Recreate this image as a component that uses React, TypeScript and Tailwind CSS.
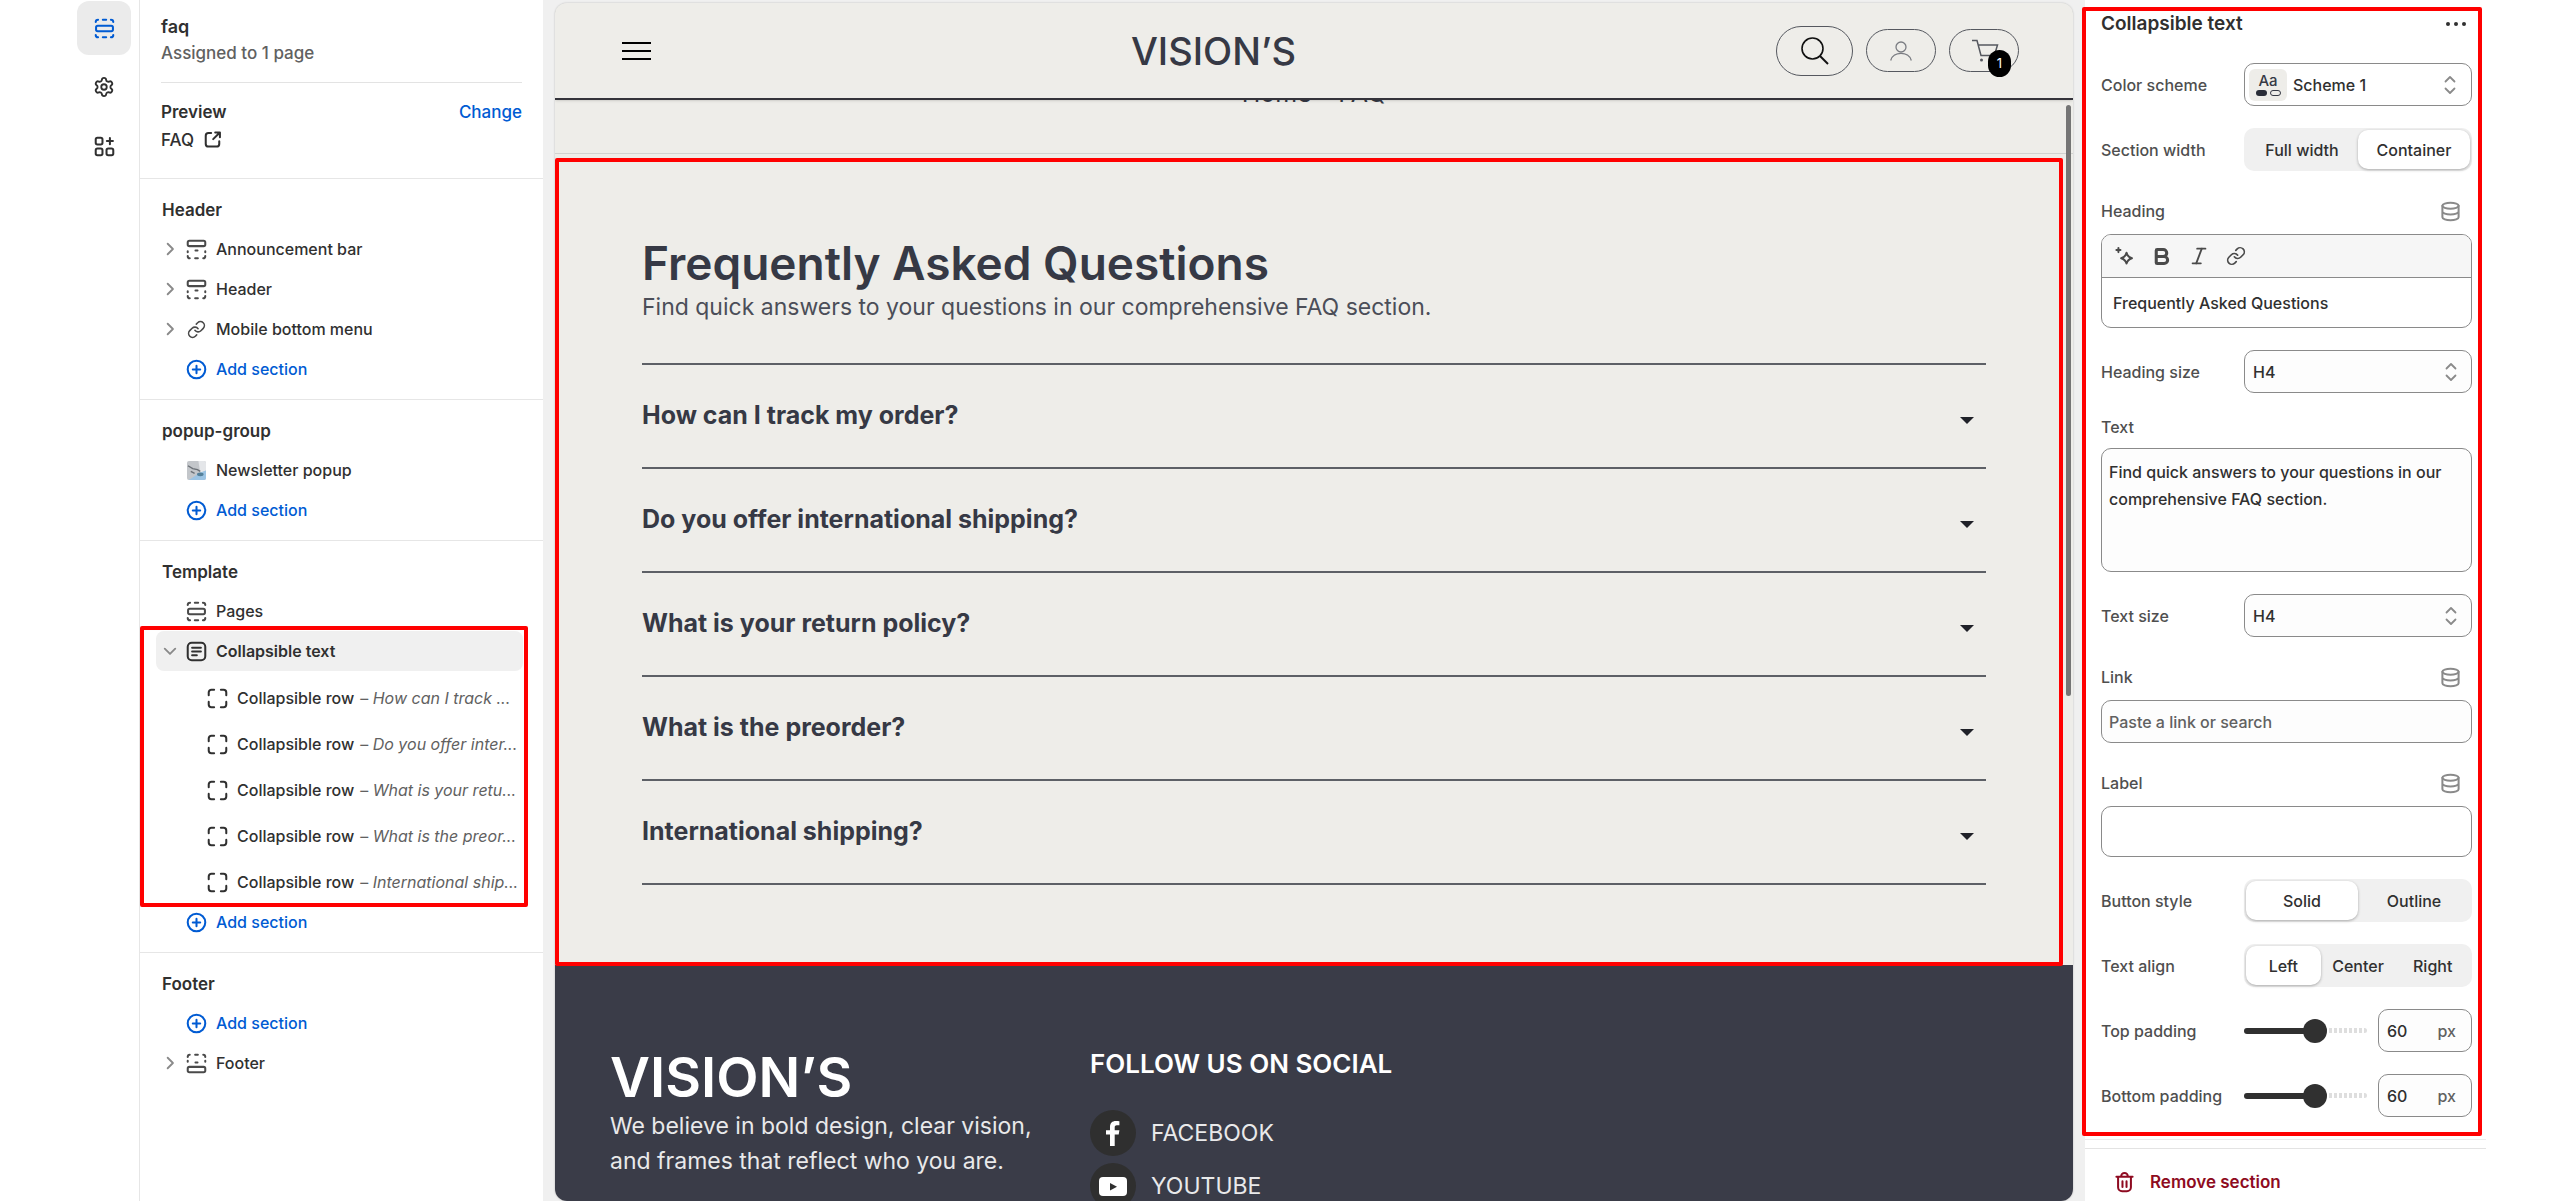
import { useState } from "react";
import type { ReactNode } from "react";
import { Bold, Italic, Link as LinkIcon, Settings } from "lucide-react";

const faqs = [
  { question: "How can I track my order?", short: "How can I track ..." },
  { question: "Do you offer international shipping?", short: "Do you offer inter..." },
  { question: "What is your return policy?", short: "What is your retu..." },
  { question: "What is the preorder?", short: "What is the preor..." },
  { question: "International shipping?", short: "International ship..." },
];

type IconProps = { children: ReactNode; className?: string };

function Icon({ children, className = "" }: IconProps) {
  return (
    <svg
      viewBox="0 0 20 20"
      fill="none"
      stroke="currentColor"
      strokeWidth="1.5"
      strokeLinecap="round"
      strokeLinejoin="round"
      aria-hidden="true"
      className={`size-[27px] shrink-0 ${className}`}
    >
      {children}
    </svg>
  );
}

const SectionsIcon = () => (
  <Icon>
    <rect x="3.75" y="8" width="12.5" height="4" rx="1.25" />
    <path d="M3.5 5.25c0-1 .7-1.75 1.75-1.75M8.75 3.5h2.5M14.75 3.5c1.05 0 1.75.75 1.75 1.75M3.5 14.75c0 1 .7 1.75 1.75 1.75M8.75 16.5h2.5M14.75 16.5c1.05 0 1.75-.75 1.75-1.75" />
  </Icon>
);

const HeaderIcon = ({ flip = false }: { flip?: boolean }) => (
  <Icon className={flip ? "rotate-180" : ""}>
    <rect x="3.5" y="3.5" width="13" height="4" rx="1.25" />
    <path d="M3.5 11.25v.75M16.5 11.25v.75M9.25 10.75h1.5M3.5 14.75c0 1 .6 1.75 1.5 1.75M9 16.5h2M15 16.5c.9 0 1.5-.75 1.5-1.75" />
  </Icon>
);

const BlockIcon = () => (
  <Icon>
    <path d="M3.5 7.5v-2a2 2 0 0 1 2-2h2M12.5 3.5h2a2 2 0 0 1 2 2v2M16.5 12.5v2a2 2 0 0 1-2 2h-2M7.5 16.5h-2a2 2 0 0 1-2-2v-2" />
  </Icon>
);

const TextBlockIcon = () => (
  <Icon>
    <rect x="3.5" y="3.5" width="13" height="13" rx="3" />
    <path d="M6.75 7.25h6.5M6.75 10h6.5M6.75 12.75h3.5" />
  </Icon>
);

const PlusCircleIcon = () => (
  <Icon>
    <circle cx="10" cy="10" r="6.5" />
    <path d="M10 7.25v5.5M7.25 10h5.5" />
  </Icon>
);

const AppsIcon = () => (
  <Icon>
    <rect x="3.5" y="3.5" width="5" height="5" rx="1.25" />
    <rect x="3.5" y="11.5" width="5" height="5" rx="1.25" />
    <rect x="11.5" y="11.5" width="5" height="5" rx="1.25" />
    <path d="M14 3.75v4.5M11.75 6h4.5" />
  </Icon>
);

const ExternalIcon = () => (
  <Icon>
    <path d="M9 4.5H7a2 2 0 0 0-2 2v6a2 2 0 0 0 2 2h6a2 2 0 0 0 2-2v-2M12 4h3.5v3.500M15.250 4.250 10.500 9" />
  </Icon>
);

const DatabaseIcon = () => (
  <Icon className="text-[#8a8a8a]">
    <ellipse cx="10" cy="5.75" rx="6" ry="2.25" />
    <path d="M4 5.75v8.5c0 1.25 2.7 2.25 6 2.25s6-1 6-2.25v-8.5M4 10c0 1.250 2.700 2.250 6 2.250s6-1 6-2.250" />
  </Icon>
);

const MagicIcon = () => (
  <Icon>
    <path d="M11.5 7.25c.6 2.4 1.6 3.4 4 4-2.4.6-3.4 1.6-4 4-.6-2.4-1.6-3.4-4-4 2.4-.6 3.4-1.6 4-4z" />
    <path d="M5.5 3.75v3M4 5.25h3" />
  </Icon>
);

const TrashIcon = () => (
  <Icon>
    <path d="M4 5.75h12M7.5 5.5a2.5 2.5 0 0 1 5 0M5.25 6v7.5a3 3 0 0 0 3 3h3.5a3 3 0 0 0 3-3V6M8.5 9v4.25M11.5 9v4.25" />
  </Icon>
);

const ChevronIcon = ({ open = false }: { open?: boolean }) => (
  <svg
    viewBox="0 0 12 12"
    fill="none"
    stroke="#8a8a8a"
    strokeWidth="1.6"
    strokeLinecap="round"
    strokeLinejoin="round"
    aria-hidden="true"
    className={`size-[14px] shrink-0 ${open ? "rotate-90" : ""}`}
  >
    <path d="M4 1.5 8.5 6 4 10.5" />
  </svg>
);

const SelectArrows = () => (
  <svg
    viewBox="0 0 12 20"
    fill="none"
    stroke="#8a8a8a"
    strokeWidth="1.8"
    strokeLinecap="round"
    strokeLinejoin="round"
    aria-hidden="true"
    className="pointer-events-none absolute top-1/2 right-[15px] h-5 w-3 -translate-y-1/2"
  >
    <path d="M1.5 6.5 6 2l4.5 4.5M1.5 13.5 6 18l4.5-4.5" />
  </svg>
);

const Thumbnail = () => (
  <svg viewBox="0 0 20 20" className="mx-1 size-[19px] shrink-0" aria-hidden="true">
    <rect width="20" height="20" rx="2" fill="#c3c6ca" />
    <path d="M12 0h6a2 2 0 0 1 2 2v8l-6 3z" fill="#e4e6e9" />
    <path d="M2 20 14 12l6-2v8a2 2 0 0 1-2 2z" fill="#9cc4e4" />
    <path d="M1 5l5 3 5 1 3 2M4 11l4 2" stroke="#6b7076" strokeWidth="1.5" fill="none" />
    <ellipse cx="14" cy="14" rx="3.5" ry="2" fill="#54809a" />
  </svg>
);

function AddSection() {
  return (
    <button type="button" className="flex h-10 w-full items-center gap-[6px] pl-[43px] text-[#005bd3]">
      <PlusCircleIcon />
      Add section
    </button>
  );
}

function TreeItem({ label, icon, expandable = false }: { label: string; icon: ReactNode; expandable?: boolean }) {
  return (
    <button type="button" className="flex h-10 w-full items-center pl-[23px]">
      <span className="flex w-5 shrink-0">{expandable && <ChevronIcon />}</span>
      <span className="mr-[6px] text-[#4a4a4a]">{icon}</span>
      {label}
    </button>
  );
}

function TreeGroup({ title, children }: { title: string; children: ReactNode }) {
  return (
    <section className="border-b border-[#e6e6e6] pt-[19px] pb-[10px] last:border-b-0">
      <h2 className="mb-[7px] pl-[22px] text-[17px] leading-6 font-semibold">{title}</h2>
      {children}
    </section>
  );
}

function Rail() {
  return (
    <nav className="flex w-[139px] shrink-0 flex-col gap-[5px] pt-px pl-[77px]" aria-label="Editor">
      <button type="button" aria-label="Sections" className="flex size-[54px] items-center justify-center rounded-xl bg-[#ebebeb] text-[#005bd3]">
        <SectionsIcon />
      </button>
      <button type="button" aria-label="Theme settings" className="flex size-[54px] items-center justify-center">
        <Settings size={22} />
      </button>
      <button type="button" aria-label="Apps" className="flex size-[54px] items-center justify-center">
        <AppsIcon />
      </button>
    </nav>
  );
}

function Sidebar() {
  return (
    <aside className="w-[404px] shrink-0 overflow-hidden border-l border-[#e6e6e6] text-[16px] font-[450]">
      <div className="border-b border-[#e6e6e6] px-[21px] pt-[14px] pb-[23px] text-[17px]">
        <h1 className="text-[18px] leading-[26px] font-semibold">faq</h1>
        <p className="leading-[26px] text-[#616161]">Assigned to 1 page</p>
        <div className="mt-4 flex items-center justify-between border-t border-[#e3e3e3] pt-[15px] leading-7">
          <h2 className="font-semibold">Preview</h2>
          <button type="button" className="text-[#005bd3]">Change</button>
        </div>
        <a href="#faq" className="flex items-center gap-[5px] leading-[29px]">
          FAQ
          <ExternalIcon />
        </a>
      </div>

      <TreeGroup title="Header">
        <TreeItem label="Announcement bar" icon={<HeaderIcon />} expandable />
        <TreeItem label="Header" icon={<HeaderIcon />} expandable />
        <TreeItem label="Mobile bottom menu" icon={<LinkIcon size={19} className="mx-1" />} expandable />
        <AddSection />
      </TreeGroup>

      <TreeGroup title="popup-group">
        <TreeItem label="Newsletter popup" icon={<Thumbnail />} />
        <AddSection />
      </TreeGroup>

      <TreeGroup title="Template">
        <TreeItem label="Pages" icon={<SectionsIcon />} />
        <div className="relative">
          <div className="pr-5 pl-4">
            <button type="button" className="flex h-10 w-full items-center rounded-lg bg-[#f0f0f0] pl-[7px] font-semibold">
              <span className="flex w-5 shrink-0"><ChevronIcon open /></span>
              <span className="mr-[6px]"><TextBlockIcon /></span>
              Collapsible text
            </button>
          </div>
          <ul className="flex flex-col gap-[6px] pt-[7px]">
            {faqs.map((faq) => (
              <li key={faq.question}>
                <button type="button" className="flex h-10 w-full items-center pl-16 whitespace-nowrap">
                  <BlockIcon />
                  <span className="ml-[6px]">Collapsible row</span>
                  <span className="ml-[6px] font-normal text-[#616161]">
                    – <em>{faq.short}</em>
                  </span>
                </button>
              </li>
            ))}
          </ul>
          {/* highlight around the active section */}
          <div className="pointer-events-none absolute -inset-y-[5px] left-0 right-[15px] rounded-xs border-4 border-[#ff0000]" />
        </div>
        <AddSection />
      </TreeGroup>

      <TreeGroup title="Footer">
        <AddSection />
        <TreeItem label="Footer" icon={<HeaderIcon flip />} expandable />
      </TreeGroup>
    </aside>
  );
}

function StoreHeader() {
  return (
    <header className="relative z-10 flex h-[97px] shrink-0 items-center justify-between border-b-2 border-[#34333a] bg-[#eeede9] pr-[54px] pl-[67px] shadow-sm">
      <button type="button" aria-label="Menu" className="flex w-[29px] flex-col gap-[6px]">
        <span className="h-[2px] bg-black" />
        <span className="h-[2px] bg-black" />
        <span className="h-[2px] bg-black" />
      </button>
      <a href="#home" className="text-[38px] leading-10 font-medium text-[#363945]">VISION’S</a>
      <div className="flex items-center justify-end gap-[13px] text-[#55585f]">
        <button type="button" aria-label="Search" className="flex h-[50px] w-[77px] items-center justify-center rounded-full border border-[#55585f]">
          <svg viewBox="0 0 28 28" fill="none" stroke="#111" strokeWidth="1.6" className="size-7">
            <circle cx="11.5" cy="11.5" r="10.5" />
            <path d="m19 19 8 8" strokeWidth="2" />
          </svg>
        </button>
        <button type="button" aria-label="Account" className="flex h-[43px] w-[70px] items-center justify-center rounded-full border border-[#55585f]">
          <svg viewBox="0 0 22 20" fill="none" stroke="#7a7c82" strokeWidth="1.3" className="h-5 w-[22px]">
            <circle cx="11" cy="6" r="5" />
            <path d="M.7 19.5C3 10 19 10 21.300 19.500" />
          </svg>
        </button>
        <button type="button" aria-label="Cart, 1 item" className="relative flex h-[43px] w-[70px] items-center rounded-full border border-[#55585f] pl-[21px]">
          <svg viewBox="0 0 28 24" fill="none" stroke="#55585f" strokeWidth="1.5" className="h-6 w-7">
            <path d="M1 1.500h5L10 16.500h13.500M7.500 6h19l-3 10" />
            <circle cx="10.500" cy="21" r="1.500" fill="#55585f" stroke="none" />
          </svg>
          <span className="absolute -bottom-[6px] right-[7px] flex h-[27px] w-[23px] items-center justify-center rounded-full bg-black text-[13px] text-white">1</span>
        </button>
      </div>
    </header>
  );
}

function FaqSection() {
  const [openRow, setOpenRow] = useState<number | null>(null);

  return (
    <section id="faq" className="relative border-t border-[#d2d2d0] px-[87px] pt-[85px] pb-20 text-[#363945]">
      <h2 className="text-[46px] leading-[48px] font-semibold">Frequently Asked Questions</h2>
      <p className="mt-1 text-[23px] leading-8 text-[#4b4e58]">
        Find quick answers to your questions in our comprehensive FAQ section.
      </p>
      <ul className="mt-10 border-t-2 border-[#5d6066]">
        {faqs.map((faq, i) => (
          <li key={faq.question} className="border-b-2 border-[#5d6066]">
            <button
              type="button"
              aria-expanded={openRow === i}
              onClick={() => setOpenRow(openRow === i ? null : i)}
              className="flex h-[102px] w-full items-center justify-between pr-3 text-left text-[25px] font-bold"
            >
              {faq.question}
              <svg viewBox="0 0 14 7" className="mt-2 h-[7px] w-[14px]" aria-hidden="true">
                <path d="M0 0h14L7 7z" fill="#1f2128" />
              </svg>
            </button>
          </li>
        ))}
      </ul>
      <div className="pointer-events-none absolute top-1 right-[10px] -bottom-px left-0 rounded-xs border-4 border-[#ff0000]" />
    </section>
  );
}

function StoreFooter() {
  return (
    <footer className="flex flex-1 bg-[#3a3c48] px-[55px] text-[23px] text-[#e9e9ea]">
      <div className="w-[480px] shrink-0 pt-20">
        <p className="text-[55px] leading-[64px] font-semibold text-white">VISION’S</p>
        <p className="leading-[35px] whitespace-nowrap">
          We believe in bold design, clear vision,
          <br />
          and frames that reflect who you are.
        </p>
      </div>
      <div className="pt-[83px]">
        <h3 className="mb-[30px] text-[26px] leading-8 font-semibold text-white">FOLLOW US ON SOCIAL</h3>
        <ul className="flex flex-col gap-[7px]">
          <li>
            <a href="#facebook" className="flex items-center gap-[15px]">
              <span className="flex size-[46px] items-center justify-center rounded-full bg-[#2f2f2f]">
                <svg viewBox="0 0 14 25" fill="#fff" className="h-[25px] w-[14px]" aria-hidden="true">
                  <path d="M4 25V13.500H0V9.200h4V6C4 2 6.300 0 9.800 0c1.700 0 3.200.2 3.600.2v4h-2.500C9 4.200 8.700 5.200 8.700 6.400v2.800h4.700l-.7 4.300h-4V25z" />
                </svg>
              </span>
              FACEBOOK
            </a>
          </li>
          <li>
            <a href="#youtube" className="flex items-center gap-[15px]">
              <span className="flex size-[46px] items-center justify-center rounded-full bg-[#2f2f2f]">
                <svg viewBox="0 0 28 19" className="h-[19px] w-7" aria-hidden="true">
                  <rect width="28" height="19" rx="4" fill="#fff" />
                  <path d="M11 6v7.500L18 9.750z" fill="#2f2f2f" />
                </svg>
              </span>
              YOUTUBE
            </a>
          </li>
        </ul>
      </div>
    </footer>
  );
}

function Preview() {
  return (
    <main className="min-w-0 flex-1 overflow-hidden bg-[#f0f0f0] px-3 pt-[3px]">
      <div className="relative flex h-full flex-col overflow-hidden rounded-xl bg-[#eeede9] shadow-[0_0_2px_rgba(0,0,0,0.25)]">
        <StoreHeader />
        <nav className="h-[53px] shrink-0 text-center text-[25px] text-[#363945]" aria-label="Breadcrumb">
          <p className="relative -top-[23px] leading-8">Home – FAQ</p>
        </nav>
        <FaqSection />
        <StoreFooter />
        <div className="absolute top-[102px] right-[2px] h-[591px] w-[5px] rounded-full bg-[#757575]" />
      </div>
    </main>
  );
}

function Field({ label, htmlFor, children }: { label: string; htmlFor?: string; children: ReactNode }) {
  return (
    <div className="grid min-h-[43px] grid-cols-[143px_1fr] items-center">
      <label htmlFor={htmlFor} className="whitespace-nowrap text-[#4f4f4f]">{label}</label>
      {children}
    </div>
  );
}

function SourceLabel({ label, htmlFor }: { label: string; htmlFor: string }) {
  return (
    <div className="mb-[5px] flex h-9 items-center justify-between pr-2">
      <label htmlFor={htmlFor} className="text-[#4f4f4f]">{label}</label>
      <button type="button" aria-label={`Connect dynamic source to ${label}`}>
        <DatabaseIcon />
      </button>
    </div>
  );
}

function SizeSelect({ id }: { id: string }) {
  return (
    <div className="relative">
      <select id={id} defaultValue="H4" className="h-[43px] w-full appearance-none rounded-[10px] border border-[#8a8a8a] bg-[#fdfdfd] px-2">
        <option>H2</option>
        <option>H3</option>
        <option>H4</option>
      </select>
      <SelectArrows />
    </div>
  );
}

function Segmented({ options, initial, label }: { options: string[]; initial: string; label: string }) {
  const [value, setValue] = useState(initial);
  return (
    <div role="group" aria-label={label} className="flex h-[43px] rounded-[10px] bg-[#f0f0f0] p-[2px]">
      {options.map((option) => (
        <button
          key={option}
          type="button"
          aria-pressed={option === value}
          onClick={() => setValue(option)}
          className={`flex-1 basis-0 rounded-[10px] ${
            option === value ? "bg-white shadow-[0_1px_3px_rgba(0,0,0,0.3)]" : ""
          }`}
        >
          {option}
        </button>
      ))}
    </div>
  );
}

function PaddingControl({ id, label }: { id: string; label: string }) {
  const [value, setValue] = useState(60);
  return (
    <Field label={label} htmlFor={id}>
      <div className="flex items-center gap-[11px]">
        <div className="relative flex h-6 min-w-0 flex-1 items-center">
          <div className="absolute inset-x-0 h-[5px] rounded-full bg-[repeating-linear-gradient(90deg,#dedede_0_3px,#fff_3px_5px)]" />
          <div className="absolute left-0 h-[6px] rounded-full bg-[#303030]" style={{ width: `${value}%` }} />
          <input
            id={id}
            type="range"
            min={0}
            max={100}
            value={value}
            onChange={(e) => setValue(Number(e.target.value))}
            className="relative m-0 h-6 w-full appearance-none bg-transparent [&::-webkit-slider-thumb]:size-6 [&::-webkit-slider-thumb]:appearance-none [&::-webkit-slider-thumb]:rounded-full [&::-webkit-slider-thumb]:bg-[#303030]"
          />
        </div>
        <div className="flex h-[43px] w-[94px] items-center rounded-[10px] border border-[#8a8a8a] bg-[#fdfdfd] pr-[15px] pl-2">
          <input
            aria-label={`${label} in pixels`}
            value={value}
            onChange={(e) => setValue(Number(e.target.value) || 0)}
            className="w-full min-w-0 bg-transparent outline-none"
          />
          <span className="text-[#616161]">px</span>
        </div>
      </div>
    </Field>
  );
}

function SettingsPanel() {
  return (
    <aside className="mr-[74px] flex w-[401px] shrink-0 flex-col pt-[7px] text-[16px] font-[450]">
      <div className="relative pr-[14px] pb-[19px] pl-4">
        <div className="mb-[22px] flex h-[34px] items-center justify-between pr-[6px]">
          <h2 className="text-[19px] font-semibold">Collapsible text</h2>
          <button type="button" aria-label="More actions" className="flex gap-1">
            <span className="size-1 rounded-full bg-[#303030]" />
            <span className="size-1 rounded-full bg-[#303030]" />
            <span className="size-1 rounded-full bg-[#303030]" />
          </button>
        </div>

        <form className="flex flex-col gap-[22px]">
          <Field label="Color scheme" htmlFor="color-scheme">
            <button id="color-scheme" type="button" className="relative flex h-[43px] items-center gap-[6px] rounded-[10px] border border-[#8a8a8a] pl-1">
              <span className="flex h-8 w-[38px] flex-col items-center rounded-md bg-[#eeede9] pt-1 text-[15px] leading-[16px] text-[#363945]">
                Aa
                <span className="mt-px flex gap-[3px]">
                  <span className="h-[6px] w-[11px] rounded-full bg-[#2a2d38]" />
                  <span className="h-[6px] w-[11px] rounded-full border border-[#363945]" />
                </span>
              </span>
              Scheme 1
              <SelectArrows />
            </button>
          </Field>
          <Field label="Section width">
            <Segmented label="Section width" options={["Full width", "Container"]} initial="Container" />
          </Field>
          <div>
            <SourceLabel label="Heading" htmlFor="heading" />
            <div className="overflow-hidden rounded-[10px] border border-[#8a8a8a]">
              <div className="flex h-[43px] items-center gap-[10px] border-b border-[#8a8a8a] bg-[#f6f6f6] pl-[9px] text-[#4a4a4a]">
                <button type="button" aria-label="Generate text" className="flex w-[27px] justify-center"><MagicIcon /></button>
                <button type="button" aria-label="Bold" className="flex w-[27px] justify-center"><Bold size={21} strokeWidth={3.5} /></button>
                <button type="button" aria-label="Italic" className="flex w-[27px] justify-center"><Italic size={22} strokeWidth={2} /></button>
                <button type="button" aria-label="Insert link" className="flex w-[27px] justify-center"><LinkIcon size={20} /></button>
              </div>
              <input id="heading" defaultValue="Frequently Asked Questions" className="block h-[49px] w-full px-[11px] outline-none" />
            </div>
          </div>
          <Field label="Heading size" htmlFor="heading-size">
            <SizeSelect id="heading-size" />
          </Field>
          <div>
            <label htmlFor="text" className="mb-[9px] block leading-6 text-[#4f4f4f]">Text</label>
            <textarea
              id="text"
              defaultValue="Find quick answers to your questions in our comprehensive FAQ section."
              className="block h-[124px] w-full resize-none rounded-[10px] border border-[#8a8a8a] bg-[#fdfdfd] px-[7px] py-[10px] leading-[27px]"
            />
          </div>
          <Field label="Text size" htmlFor="text-size">
            <SizeSelect id="text-size" />
          </Field>
          <div>
            <SourceLabel label="Link" htmlFor="link" />
            <input id="link" placeholder="Paste a link or search" className="block h-[43px] w-full rounded-[10px] border border-[#8a8a8a] bg-[#fdfdfd] px-[7px] placeholder:text-[#616161]" />
          </div>
          <div>
            <SourceLabel label="Label" htmlFor="label" />
            <input id="label" className="block h-[51px] w-full rounded-[10px] border border-[#8a8a8a] px-[7px]" />
          </div>
          <Field label="Button style">
            <Segmented label="Button style" options={["Solid", "Outline"]} initial="Solid" />
          </Field>
          <Field label="Text align">
            <Segmented label="Text align" options={["Left", "Center", "Right"]} initial="Left" />
          </Field>
          <PaddingControl id="top-padding" label="Top padding" />
          <PaddingControl id="bottom-padding" label="Bottom padding" />
        </form>
        <div className="pointer-events-none absolute inset-y-0 right-1 -left-[3px] rounded-xs border-4 border-[#ff0000]" />
      </div>
      <div className="mt-[3px] border-t border-[#ebebeb] pt-2">
        <div className="border-t border-[#e3e3e3] pt-5 pl-[26px]">
          <button type="button" className="flex items-center gap-3 text-[17px] font-semibold text-[#8e0b21]">
            <TrashIcon />
            Remove section
          </button>
        </div>
      </div>
    </aside>
  );
}

export default function App() {
  return (
    <div className="flex h-screen overflow-hidden bg-white font-['Inter',sans-serif] text-[#303030]">
      <Rail />
      <Sidebar />
      <Preview />
      <SettingsPanel />
    </div>
  );
}
